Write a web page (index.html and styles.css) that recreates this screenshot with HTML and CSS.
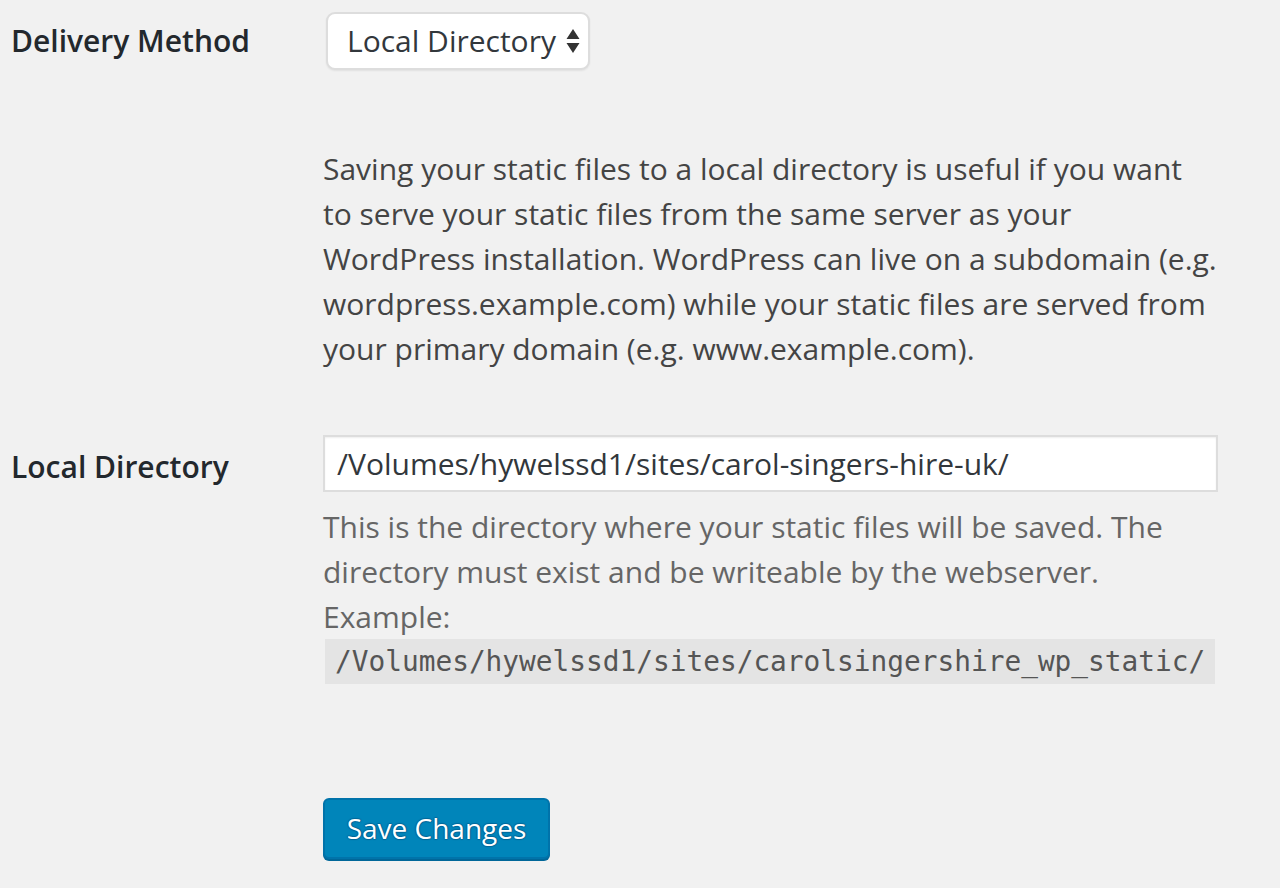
FILE: index.html
```html
<!DOCTYPE html>
<html>
<head>
<meta charset="utf-8">
<link rel="stylesheet" href="styles.css">
</head>
<body>
<form class="settings">
  <div class="row row-delivery">
    <div class="label">Delivery Method</div>
    <div class="field">
      <div class="select">
        <span class="select-text">Local Directory</span>
        <svg class="select-arrows" width="14" height="26" viewBox="0 0 14 26"><path d="M7 1 L13.5 11 H0.5 Z M7 25 L0.5 15 H13.5 Z" fill="#333"/></svg>
      </div>
    </div>
  </div>
  <div class="row row-intro">
    <div class="label"></div>
    <div class="field">
      <p class="intro">Saving your static files to a local directory is useful if you want to serve your static files from the same server as your WordPress installation. WordPress can live on a subdomain (e.g. wordpress.example.com) while your static files are served from your primary domain (e.g. www.example.com).</p>
    </div>
  </div>
  <div class="row row-dir">
    <div class="label label-dir">Local Directory</div>
    <div class="field">
      <div class="input">/Volumes/hywelssd1/sites/carol-singers-hire-uk/</div>
      <p class="desc">This is the directory where your static files will be saved. The directory must exist and be writeable by the webserver.<br>Example: <code>/Volumes/hywelssd1/sites/carolsingershire_wp_static/</code></p>
    </div>
  </div>
  <div class="row row-submit">
    <div class="label"></div>
    <div class="field">
      <button type="button" class="button-primary">Save Changes</button>
    </div>
  </div>
</form>
</body>
</html>
```
FILE: styles.css
```css
html, body {
  margin: 0;
  padding: 0;
  background: #f1f1f1;
}
body {
  font-family: "Open Sans", "Noto Sans", sans-serif;
  font-size: 30px;
  color: #444;
  width: 1280px;
  height: 888px;
  overflow: hidden;
}
.settings {
  padding-left: 11px;
}
.row {
  display: grid;
  grid-template-columns: 312px 900px;
}
.label {
  font-weight: 600;
  color: #23282d;
}
.row-delivery {
  padding-top: 12px;
}
.row-delivery .label {
  line-height: 58px;
}
.select {
  display: inline-flex;
  align-items: center;
  box-sizing: border-box;
  height: 58px;
  margin-left: 3px;
  padding: 0 8px 0 19px;
  background: #fff;
  border: 2px solid #ddd;
  border-radius: 9px;
  box-shadow: 0 1px 2px rgba(0,0,0,0.07);
  color: #32373c;
  gap: 10px;
}
.select-text {
  line-height: 1;
}
.intro {
  margin: 76px 0 0 0;
  line-height: 45px;
  width: 894px;
}
.row-dir {
  margin-top: 64px;
}
.label-dir {
  line-height: 56px;
  padding-top: 4px;
}
.input {
  box-sizing: border-box;
  height: 57px;
  width: 895px;
  background: #fff;
  border: 2px solid #ddd;
  box-shadow: inset 0 1px 2px rgba(0,0,0,0.07);
  padding: 0 12px;
  line-height: 53px;
  color: #32373c;
}
.desc {
  margin: 12px 0 0 0;
  line-height: 45px;
  color: #666;
}
.desc code {
  display: inline-block;
  vertical-align: top;
  font-family: "DejaVu Sans Mono", monospace;
  font-size: 27.8px;
  background: #e4e4e4;
  color: #555;
  padding: 0 10px;
  margin-left: 2px;
  line-height: 45px;
}
.row-submit {
  margin-top: 114px;
}
.button-primary {
  box-sizing: border-box;
  width: 227px;
  height: 61px;
  background: #0085ba;
  border: 2px solid #0073aa;
  border-radius: 6px;
  box-shadow: 0 2px 0 #006799;
  color: #fff;
  font-family: "Open Sans", "Noto Sans", sans-serif;
  font-size: 28px;
  text-shadow: 0 -1px 1px #006799, 1px 0 1px #006799, 0 1px 1px #006799, -1px 0 1px #006799;
  padding: 0 0 2px 0;
  cursor: pointer;
}
```
